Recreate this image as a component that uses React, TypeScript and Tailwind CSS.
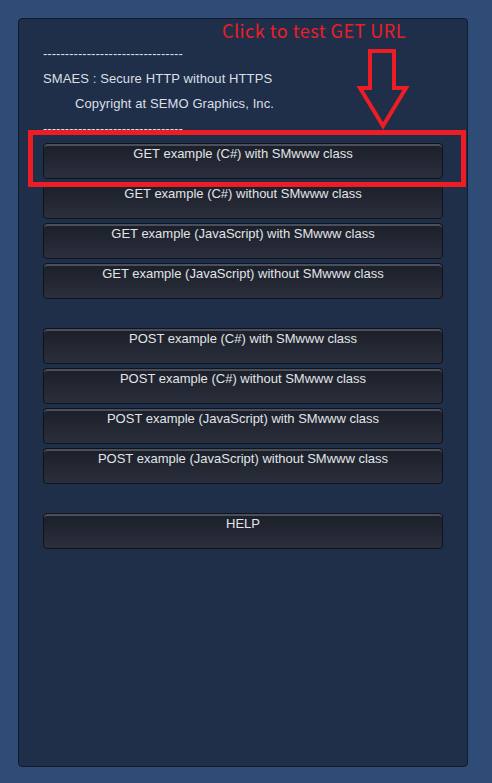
const getButtons = [
  'GET example (C#) with SMwww class',
  'GET example (C#) without SMwww class',
  'GET example (JavaScript) with SMwww class',
  'GET example (JavaScript) without SMwww class',
]

const postButtons = [
  'POST example (C#) with SMwww class',
  'POST example (C#) without SMwww class',
  'POST example (JavaScript) with SMwww class',
  'POST example (JavaScript) without SMwww class',
]

const DASHES = '--------------------------------'

const GuiButton = ({ label }: { label: string }) => {
  return (
    <button className="h-[36px] w-[400px] rounded-[4px] border border-[#0e131c] bg-gradient-to-b from-[#1a1f29] to-[#2b2f3c] pt-[2px] text-center text-[13px] leading-[16px] text-[#e2e4e8] shadow-[inset_0_2px_0_#4a4f5b] flex justify-center items-start">
      {label}
    </button>
  )
}

const App = () => {
  return (
    <div className="min-h-[783px] w-[492px] bg-[#2f4c76] pt-[18px] pl-[18px]" style={{ fontFamily: '"Liberation Sans", Arial, sans-serif' }}>
      <div className="relative flex h-[749px] w-[450px] flex-col rounded-[4px] border border-[#121b2c] bg-[#1f2f4a] pl-[24px] pt-[22px]">
        <div className="flex flex-col text-[13px] leading-[25px] text-[#dcdfe4]">
          <p className="h-[25px] tracking-[0.04px]">{DASHES}</p>
          <p className="h-[25px] tracking-[0.1px]">SMAES : Secure HTTP without HTTPS</p>
          <p className="h-[25px] pl-[32px] tracking-[0.1px]">Copyright at SEMO Graphics, Inc.</p>
          <p className="h-[25px] tracking-[0.04px]">{DASHES}</p>
        </div>
        <div className="mt-[2px] flex flex-col gap-[4px]">
          {getButtons.map((b) => (
            <GuiButton key={b} label={b} />
          ))}
        </div>
        <div className="mt-[29px] flex flex-col gap-[4px]">
          {postButtons.map((b) => (
            <GuiButton key={b} label={b} />
          ))}
        </div>
        <div className="mt-[29px] flex flex-col">
          <GuiButton label="HELP" />
        </div>

        {/* annotation overlay */}
        <p
          className="absolute left-[203px] top-[-1px] text-[18px] leading-[24px] tracking-[0.5px] text-[#ee1c24]"
          style={{ fontFamily: '"Noto Sans CJK KR", "Noto Sans", sans-serif' }}
        >
          Click to test GET URL
        </p>
        <svg className="absolute left-[337px] top-[30px]" width="54" height="82" viewBox="0 0 54 82">
          <polygon
            points="14,2 38,2 38,39 50,39 27,77 4,39 14,39"
            fill="none"
            stroke="#ee1c24"
            strokeWidth="4"
            strokeLinejoin="miter"
          />
        </svg>
        <div className="absolute left-[9px] top-[111px] h-[57px] w-[438px] border-[5px] border-[#ee1c24]" />
      </div>
    </div>
  )
}

export default App
